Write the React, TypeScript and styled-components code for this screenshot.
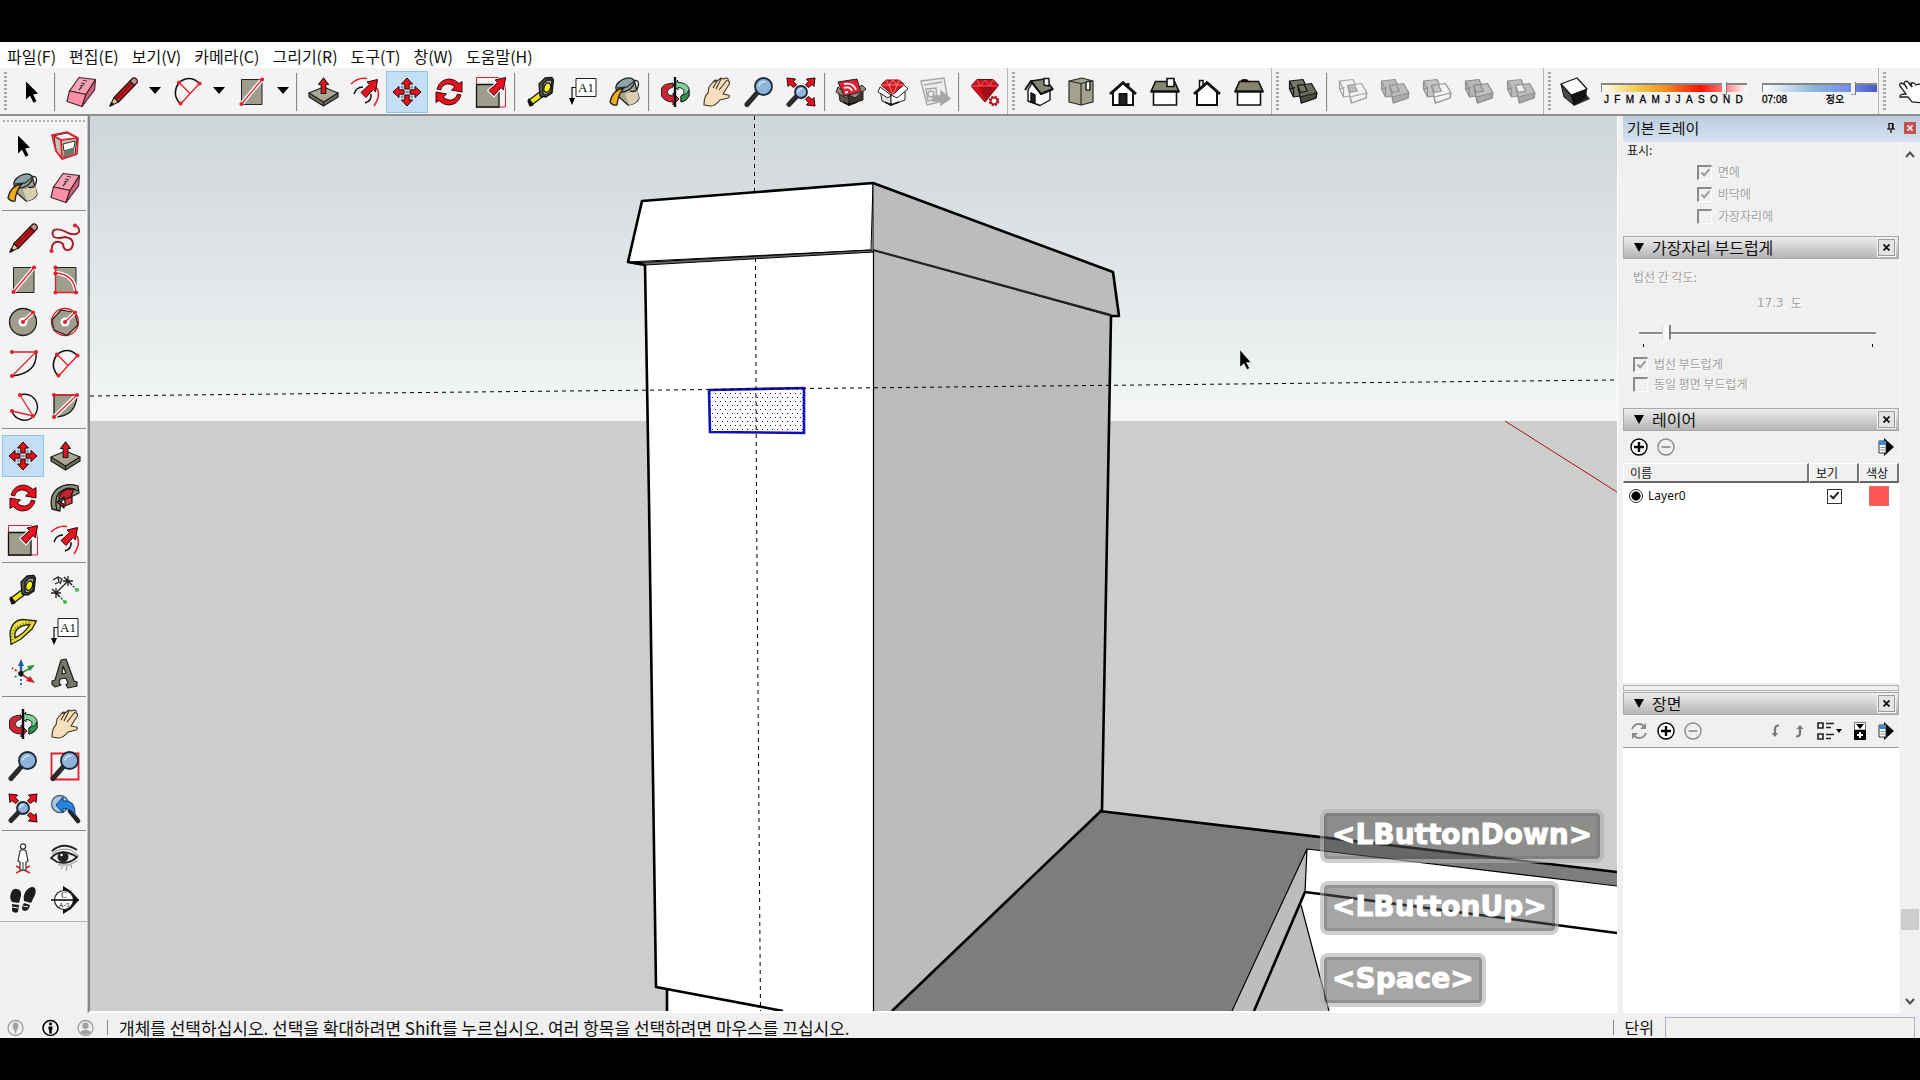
import React from "react";
import styled, { createGlobalStyle, css } from "styled-components";

const GlobalStyle = createGlobalStyle`
  *, *::before, *::after { box-sizing: border-box; }
  html, body { margin: 0; background: #000; }
  body { font-family: "Noto Sans CJK KR", "Noto Sans", sans-serif; color: #111; }
  button, input { font: inherit; color: inherit; margin: 0; }
`;

const RED = "#e8121f";
const STONE = "#9f9e8c";
const MARK = "#e0202e";

/* ---------- icons ---------- */

const NE = "30.5,1.5 20,4 22.5,6.5 14,14.5 19,19.5 26,11.5 28.5,14";

const Box3 = ({ a, b, c, line }: { a: string; b: string; c: string; line: string }) => (
  <g stroke={line} strokeWidth="1.200" strokeLinejoin="round">
    <path d="M2.500 5 16 3.500 21 14 20 19 6.500 21 2.500 13Z" fill={a} />
    <path d="M10.500 9.500 24.500 7.500 30 17 29 22 14.500 27 13 20Z" fill={b} />
    <path d="M13 21 29.500 17 29 22 14.500 27Z" fill={c} />
    <path d="M10.500 9.500 17 8.500 20.500 15 13.500 16.500Z" fill={c === "none" ? "#bbb" : a} />
    <path d="M2.500 13 8 11.500M2.500 5 6.500 14 6.500 21" fill="none" />
  </g>
);

const Bucket = (
  <g stroke="#222" strokeWidth="1.3" strokeLinejoin="round">
    <path d="M10 7 Q19 0 25 4 L30 22 Q28 28 19 29 L10 21Z" fill="#a9a48c" />
    <path d="M16 18 28 13 30 22 Q27 28 20 29Z" fill="#d8d0b0" stroke="none" />
    <ellipse cx="16" cy="9" rx="10" ry="6" transform="rotate(-28 16 9)" fill="#8ea3a6" />
    <path d="M8 12 18 11 27 4" fill="none" stroke="#333" />
    <path d="M1 26 Q4 13 15 12 Q9 18 8 29 Q4 30 1 26Z" fill="#f5ac19" />
    <path d="M25 5 Q31 3 29 11 Q27 17 21 15" fill="none" />
  </g>
);

const Lens = ({ x, y, r }: { x: number; y: number; r: number }) => (
  <g>
    <path d={`M4 28.5 ${x - r * 0.8} ${y + r * 0.8}`} stroke="#2b2b2b" strokeWidth="5" strokeLinecap="round" />
    <circle cx={x} cy={y} r={r} fill="#8fb4dc" stroke="#1c2a38" strokeWidth="1.8" />
    <path d={`M${x - r * 0.55} ${y} Q${x - r * 0.4} ${y - r * 0.6} ${x + r * 0.2} ${y - r * 0.55}`} stroke="#cfe3f5" strokeWidth="1.6" fill="none" />
  </g>
);

const Dots = ({ p }: { p: number[][] }) => (
  <>
    {p.map(([x, y]) => (
      <circle key={`${x}-${y}`} cx={x} cy={y} r="2.1" fill={MARK} />
    ))}
  </>
);

const House = ({ door, chimney, side }: { door?: boolean; chimney?: "l" | "r"; side?: boolean }) =>
  side ? (
    <g stroke="#111" strokeWidth="1.6">
      <path d="M4.500 16V29H27.500V16" fill="#fff" />
      <path d="M6.500 5.500H25.500L30 15.500H2Z" fill="#86856f" />
      <path d="M2 15.500H30" strokeWidth="2.400" />
    </g>
  ) : (
    <g stroke="#111" strokeWidth="2">
      {chimney === "r" && <path d="M21 7V10" strokeWidth="3" />}
      {chimney === "l" && <path d="M8.500 13V4.500H12V9" fill="#fff" strokeWidth="1.500" />}
      <path d="M6 16V29H26V16L16 7Z" fill="#fff" />
      <path d="M3 18 16 6.500 29 18" fill="none" strokeWidth="2.800" />
      {door && <path d="M12.500 29V18H19.500V29Z" fill="#222" />}
    </g>
  );

const Crate = ({ gem }: { gem?: boolean }) => (
  <g stroke="#222" strokeWidth="1" strokeLinejoin="round">
    <path d="M3 12 14 19 14 29 5 25Z" fill={gem ? "#e2e2e2" : "#5d534c"} />
    <path d="M28 12 14 19 14 29 28 24Z" fill={gem ? "#fff" : "#3c3632"} />
    <path d="M3 11 1 16 11 22 14 19ZM27 9 31 13 20 22 14 19Z" fill={gem ? "#fff" : "#94887a"} />
    {gem ? (
      <>
        <path d="M4 9 9 4H22L27 8 16 19Z" fill="#d4141f" stroke="#7d0a12" />
        <path d="M4 9H27M9 4 12 9 16 19 20 9 22 4M12 9 16 4 20 9" stroke="#f58a8a" fill="none" />
      </>
    ) : (
      <>
        <path d="M3 6 22 3 26 16 9 20Z" fill="#dc2130" />
        <path d="M9 8Q18 6 21 14M9 12Q15 10 17 15M10 16.500 13 16" stroke="#fff" strokeWidth="1.800" fill="none" />
      </>
    )}
    <path d="M14 27V30M8 26 14 29 22 26" stroke="#111" strokeWidth="1.600" fill="none" />
  </g>
);

const icons: Record<string, React.ReactNode> = {
  select: <path d="M11 5.500V23.500L15 19.800 18.500 26.800 21.500 25.300 18.200 18.500 23 17.500Z" fill="#000" />,
  eraser: (
    <g stroke="#43252c" strokeWidth="1.200" strokeLinejoin="round">
      <path d="M14 1.500 30.500 3.500 21 18.500 4.500 15Z" fill="#f4a3b6" />
      <path d="M4.500 15 21 18.500 17 30.500 2 25.500Z" fill="#ff8fa6" />
      <path d="M30.500 3.500 29.500 14 17 30.500 21 18.500Z" fill="#d7607b" />
      <path d="M14 14 17 10.500M15 10 19 9M16 7 20 8M18 4.500 22 5" stroke="#5a2a38" fill="none" />
    </g>
  ),
  pencil: (
    <g stroke="#2a1512" strokeWidth="1.200" strokeLinejoin="round">
      <path d="M3 30 7 21.500 11.500 26Z" fill="#e8cf9c" />
      <path d="M7 21.500 23 5 27.500 9.500 11.500 26Z" fill="#c8141c" />
      <path d="M23 5 26 2Q30 1.500 30.500 6L27.500 9.500Z" fill="#c98f8f" />
      <path d="M9 23.500 25 7" stroke="#7c0c10" />
      <path d="M3 30 4.500 26.500 6.500 28.500Z" fill="#111" />
    </g>
  ),
  arc: (
    <g fill="none">
      <path d="M9.500 28Q0 18 8 6.500 19 -2 28.500 7.500" stroke="#111" strokeWidth="1.500" />
      <path d="M9.500 28 28.500 7.500M8 6.500 19 17.500" stroke={MARK} strokeWidth="1.300" />
      <Dots p={[[9.5, 27.5], [28.5, 7.5], [8, 6.5]]} />
    </g>
  ),
  rect: (
    <g>
      <path d="M6.500 3.500H27V28.500H6.500Z" fill={STONE} stroke="#222" />
      <path d="M6.500 28 27 3.500" stroke="#fff" strokeWidth="4" />
      <path d="M6.500 28 27 3.500" stroke={MARK} strokeWidth="1.300" />
      <Dots p={[[6.5, 28], [27, 3.5]]} />
    </g>
  ),
  push: (
    <g stroke="#1e1e1a" strokeWidth="1.200" strokeLinejoin="round">
      <path d="M2 17V21L16.500 30 31 21V17L16.500 25Z" fill="#6f6e5f" />
      <path d="M2 17 16.500 11 31 17 16.500 26Z" fill="#a9a894" />
      <path d="M16.500 26V30" />
      <path d="M16.500 2 21.500 8.500H18.800V17.500H14.200V8.500H11.500Z" fill={RED} />
    </g>
  ),
  offset: (
    <g fill="none">
      <path d="M2 8Q9 1 18 2.500M28 12Q32 20 25 30" stroke={MARK} strokeWidth="1.600" />
      <path d="M5 18Q7 11 14 11M22 18Q23 25 16 27" stroke="#111" strokeWidth="1.500" />
      <polygon points={NE} fill={RED} stroke="#2a0508" strokeWidth="1" transform="translate(-2 2)" />
    </g>
  ),
  move: (
    <g>
      {[0, 90, 180, 270].map((r) => (
        <path key={r} transform={`rotate(${r} 16 16)`} d="M16 2 21.500 8H18.200V13H13.800V8H10.500Z" fill={RED} stroke="#2a0508" strokeWidth="1" />
      ))}
      <path d="M10.500 10.500 12 12M21.500 10.500 20 12M10.500 21.500 12 20M21.500 21.500 20 20M14.500 16H17.500" stroke="#8b8b8b" strokeWidth="2" />
    </g>
  ),
  rotate: (
    <g fill={RED} stroke="#3a060a" strokeWidth="1" strokeLinejoin="round">
      {[0, 180].map((r) => (
        <path key={r} transform={`rotate(${r} 16 16)`} d="M4 13Q7 3 17 3Q22 3.500 26 7.500L29 5.500V16L18.500 14L22 11Q17 6.500 12 8.500Q8.500 10 7.500 14Z" />
      ))}
    </g>
  ),
  scale: (
    <g>
      <path d="M1.500 1.500H30.500V31H1.500Z" fill="none" stroke={MARK} />
      <path d="M1.500 8.500H24V31H1.500Z" fill={STONE} stroke="#111" strokeWidth="1.300" />
      <polygon points={NE} fill={RED} stroke="#fff" strokeWidth="3" />
      <polygon points={NE} fill={RED} stroke="#2a0508" strokeWidth="1" />
    </g>
  ),
  tape: (
    <g stroke="#161616" strokeWidth="1.300" strokeLinejoin="round">
      <path d="M4 24 16 15 20 19 8 28Z" fill="#f2e50f" />
      <path d="M4 23 8 29 5 30 3 25Z" fill="#111" />
      <path d="M14 8 20 2 27 1.500 28.500 4 27 17 21 21 15 20Z" fill="#55554c" />
      <path d="M18 8 22 4 27 4 26 16 21 19 18 18Z" fill="#a9a9a0" />
      <ellipse cx="22.500" cy="11.500" rx="3.200" ry="4.800" fill="#fbf312" transform="rotate(20 22 11)" />
    </g>
  ),
  text: (
    <g>
      <path d="M9 2.500H29V20.500H9Z" fill="#fff" stroke="#222" />
      <path d="M9 11.500H5V24" fill="none" stroke="#111" strokeWidth="1.200" />
      <path d="M2 22H8L5 29Z" fill="#000" />
      <text x="19" y="15.500" textAnchor="middle" fontFamily="Liberation Serif, serif" fontSize="13" fill="#111">A1</text>
    </g>
  ),
  paint: Bucket,
  orbit: (
    <g stroke="#222" strokeWidth="1" strokeLinejoin="round">
      <path d="M14 7Q3 8 2.500 13L2.500 20Q6 26 14 26V29L20 23 14 17V20Q9 20 8 16 9 12 14 11Z" fill="#cf2432" />
      <path d="M18 6Q29 7 30 13V20Q28 25 22 26V20Q26 18 25 14Q22 11 19 11.500V14L14 9 19 4Z" fill="#7ed39c" />
      <path d="M30 14V20Q28 25 22 26V20Q29 18 30 14Z" fill="#27984a" />
      <path d="M16 1V31" stroke="#111" strokeWidth="2.400" />
    </g>
  ),
  pan: (
    <path d="M3 29Q3 20 7 17L8 11 13 5Q15 3 16 5L20 2Q22 2 22 3L25 2Q28 2 27 5L28.500 6Q29 8 27 10L22 18 27 19Q30 20 27 22L19 24Q14 30 10 30ZM13 5.500 16 5 12 12M20 3 15 13M26 4 18 14" fill="#f6dfba" stroke="#3f3325" strokeWidth="1.100" strokeLinejoin="round" />
  ),
  zoom: <Lens x={20.5} y={10.5} r={8.5} />,
  zoomwin: (
    <g>
      <path d="M2.500 3.500H29.500V29.500H2.500Z" fill="none" stroke={MARK} strokeWidth="1.800" />
      <Lens x={20.5} y={10.5} r={8.5} />
    </g>
  ),
  extents: (
    <g>
      <Lens x={16} y={16} r={6} />
      {["M2 2 10.500 3 8.500 5.500 11.500 9 8.500 11.500 5 8.500 3 10.500Z", "M30 2 21.500 3 23.500 5.500 20.500 9 23.500 11.500 27 8.500 29 10.500Z", "M30 30 21.500 29 23.500 26.500 20.500 23 23.500 20.500 27 23.500 29 21.500Z"].map((d) => (
        <path key={d} d={d} fill={RED} stroke="#2a0508" strokeWidth="1" />
      ))}
    </g>
  ),
  previous: (
    <g strokeLinejoin="round">
      <path d="M21 19 29 29" stroke="#222" strokeWidth="4.500" strokeLinecap="round" />
      <circle cx="11" cy="12" r="8.500" fill="#a8c6e4" stroke="#4a6076" strokeWidth="1.300" />
      <path d="M7 13 14 5V9Q27 7 26 24 23 16 14 16.500V21Z" fill="#2584de" stroke="#0f3d70" />
    </g>
  ),
  crate: <Crate />,
  crateGem: <Crate gem />,
  layout: (
    <g stroke="#a6a6a6" strokeWidth="1.400" fill="#ededed">
      <path d="M2 5 25 2 29 24 8 29Z" />
      <path d="M5 9 23 6M7 13 17 12 18 23 9 25Z" fill="none" />
      <circle cx="12" cy="18" r="3" />
      <path d="M14 20H22V15L31 22.500 22 29V25H14Z" fill="#a6a6a6" />
    </g>
  ),
  ruby: (
    <g strokeLinejoin="round">
      <path d="M2 10 8 3.500H24L29.500 9 16 26Z" fill="#cf101c" stroke="#6d070e" />
      <path d="M2 10H29.500L16 26 11 10Z" fill="#a30d17" stroke="none" />
      <path d="M8 3.500 11 10 16 4 21 10 24 3.500M2 10H29.500" fill="none" stroke="#ee5a62" />
      <circle cx="25" cy="25" r="4" fill="#f3f3f3" stroke="#b01822" strokeWidth="2.600" strokeDasharray="2.100 1.040" />
      <circle cx="25" cy="25" r="3.200" fill="#f3f3f3" stroke="#b01822" strokeWidth="1.500" />
    </g>
  ),
  iso: (
    <g stroke="#111" strokeWidth="1.400" strokeLinejoin="round">
      <path d="M5 14V25L17 29.500 27 24V14L18 18 9 7Z" fill="#fff" />
      <path d="M8 5 22 3 30 13 18 18Z" fill="#86856f" />
      <path d="M2 14 8 5 18 18 30 13" fill="none" strokeWidth="2" />
      <path d="M8 26V17L12 19V27Z" fill="#222" />
      <path d="M21 9V2.500H26V10Z" fill="#fff" />
    </g>
  ),
  top: (
    <g stroke="#2b2b25" strokeWidth="1.200" strokeLinejoin="round">
      <path d="M4 5 17 2 28 5V26L16 29 4 26Z" fill="#a3a28f" />
      <path d="M4 5 16 7.500 28 5M16 7.500V29" fill="none" />
      <path d="M21 6V14H25V5Z" fill="#fff" strokeWidth="1.600" />
    </g>
  ),
  front: <House door chimney="r" />,
  right: (
    <g>
      <House side />
      <path d="M18 2.500H25V10.500H18Z" fill="#fff" stroke="#111" strokeWidth="1.600" />
    </g>
  ),
  back: <House chimney="l" />,
  left: (
    <g>
      <path d="M8 5Q12 3 15 5" stroke="#111" strokeWidth="2" fill="none" />
      <House side />
    </g>
  ),
  shell: <Box3 a="#75756a" b="#6a6a5f" c="#4b4b42" line="#151515" />,
  solid1: <Box3 a="#f3f3f3" b="#f3f3f3" c="none" line="#a2a2a2" />,
  solid2: <Box3 a="#bcbcbc" b="#bcbcbc" c="#aaa" line="#929292" />,
  solid3: <Box3 a="#c4c4c4" b="#f3f3f3" c="#f3f3f3" line="#929292" />,
  solid4: <Box3 a="#b6b6b6" b="#c0c0c0" c="#aaa" line="#8c8c8c" />,
  solid5: (
    <g>
      <Box3 a="#bcbcbc" b="#bcbcbc" c="#aaa" line="#929292" />
      <path d="M10.500 9.500 17 8.500 20.500 15 13.500 16.500Z" fill="#eee" stroke="#929292" />
    </g>
  ),
  shadow: (
    <g strokeLinejoin="round">
      <path d="M8 21 15 30 31 23 26 17Z" fill="#2c2c2c" />
      <path d="M2 8 12 19 15 29 5 21Z" fill="#4c4c4c" stroke="#111" />
      <path d="M12 19 28 13 27 22 15 29Z" fill="#111" />
      <path d="M2 8 18 2 28 13 12 19Z" fill="#fff" stroke="#111" strokeWidth="1.200" />
    </g>
  ),
  grab: (
    <path d="M7 7Q12 8 13 13L10 7Q12 4 14 6L18 11 17 7Q20 6 22 9 26 7 30 10V27L18 26 14 21 6 21Q5 18 12 18L6 10Q5 8 7 7Z" fill="#fff" stroke="#222" strokeWidth="1.300" />
  ),
  component: (
    <g strokeLinejoin="round">
      <path d="M5 7 19 3 28 8 26 25 13 29 7 21Z" fill="#c3c2b4" stroke="#222" />
      <path d="M4 6 18 3 28 8 12 10Z" fill="#f2f2f2" stroke="#333" />
      <path d="M14 14 26 11 25 18 15 21Z" fill="#fff" stroke="#333" />
      <path d="M15 21 25 18V24L14 28Z" fill="#77766a" />
      <path d="M3 5 18 2 29 8 28 24 13 29 7 21ZM3 5 12 10 29 8M12 10 13 29" fill="none" stroke={MARK} strokeWidth="1.700" />
    </g>
  ),
  freehand: (
    <g>
      <path d="M26 3Q31 6 30 10 27 14 19 11 10 6 5 8 2 11 5 15 9 17 16 15 24 16 24 22 23 29 17 28 14 26 14 22 10 18 5 21 2 24 3 29" fill="none" stroke="#a51c28" strokeWidth="1.900" />
      <Dots p={[[26, 3.5], [2.5, 29]]} />
    </g>
  ),
  rotrect: (
    <g>
      <path d="M6.500 3.500H27V28.500H6.500Z" fill={STONE} stroke="#222" />
      <path d="M6.500 9Q25 10 27 28" fill="none" stroke="#fff" strokeWidth="4" />
      <path d="M6.500 3.500V28.500H27Q25 10 6.500 9" fill="none" stroke={MARK} strokeWidth="1.300" />
      <Dots p={[[6.5, 3.5], [6.5, 9.5], [6.5, 28.5], [27, 28.5]]} />
    </g>
  ),
  circle: (
    <g>
      <circle cx="16" cy="16" r="13.500" fill={STONE} stroke="#222" strokeWidth="1.300" />
      <circle cx="16" cy="16" r="4.500" fill="#fff" />
      <path d="M16 16 26 6.500" stroke="#fff" strokeWidth="4" />
      <path d="M16 16 26 6.500" stroke={MARK} strokeWidth="1.300" />
      <Dots p={[[16, 16], [26, 6.5]]} />
    </g>
  ),
  polygon: (
    <g>
      <circle cx="16" cy="16" r="13.500" fill="none" stroke={MARK} strokeWidth="1.300" />
      <path d="M12 4 26 6.500 29 19 18 29.500 5 24 3 14Z" fill={STONE} stroke="#222" strokeWidth="1.200" />
      <circle cx="16" cy="16" r="4.500" fill="#fff" />
      <path d="M16 16 26 6.500" stroke="#fff" strokeWidth="4" />
      <path d="M16 16 26 6.500" stroke={MARK} strokeWidth="1.300" />
      <Dots p={[[16, 16], [26, 6.5]]} />
    </g>
  ),
  arc2: (
    <g fill="none">
      <path d="M29 4Q31 25 5 28" stroke="#111" strokeWidth="1.400" />
      <path d="M5 4H29L5 28" stroke={MARK} strokeWidth="1.300" />
      <Dots p={[[5, 4], [29, 4], [5, 28]]} />
    </g>
  ),
  arc3: (
    <g fill="none">
      <path d="M13 5A13 13 0 1 1 5 21" stroke="#111" strokeWidth="1.400" />
      <path d="M13 5 26 26 5 21" stroke={MARK} strokeWidth="1.300" />
      <Dots p={[[13, 5], [26, 26], [5, 21]]} />
    </g>
  ),
  pie: (
    <g>
      <path d="M5 5H28Q27 27 5 27Z" fill={STONE} stroke="#111" strokeWidth="1.200" />
      <path d="M5 27 28 5" stroke="#fff" strokeWidth="4" />
      <path d="M5 5H28L5 27" fill="none" stroke={MARK} strokeWidth="1.300" />
      <Dots p={[[5, 5], [28, 5], [5, 27]]} />
    </g>
  ),
  follow: (
    <g stroke="#1b1b18" strokeWidth="1.300" strokeLinejoin="round">
      <path d="M11 29 3 27Q0 14 8 7 17 0 29 4L30 11 24 14Q11 12 11 29Z" fill="#8f8e7d" />
      <path d="M8 28Q4 13 14 8 21 4 29 9" fill="none" />
      <path d="M25 7Q11 6 10 16 11 22 15 22V26L8 20 15 15V18Q19 20 22 14Z" fill="#c5202c" />
      <path d="M16 17 23 15V21L16 24Z" fill="#e2393f" />
    </g>
  ),
  dimension: (
    <g fill="none" stroke="#222" strokeWidth="1.300">
      <path d="M7 19 19 7M3 15 11 23M2 19H12M7 14V24M15 3 23 11M14 7H24M19 2V12" />
      <path d="M7 19 16 28M19 7 28 16" strokeDasharray="2 1.500" />
      <path d="M4 6 9 3 10 8 6 10M9 3 13 5 11 10" />
      <circle cx="16" cy="28" r="2" fill="#45bd48" stroke="none" />
      <circle cx="28" cy="16" r="2" fill="#45bd48" stroke="none" />
    </g>
  ),
  protractor: (
    <g strokeLinejoin="round">
      <path d="M4 28.500 3 17Q5 4 16 3.500L29.500 5 25 13 14 23ZM8 22Q6 10 23 8.500 18 17 8 22Z" fillRule="evenodd" fill="#e8dd3c" stroke="#2d2a08" strokeWidth="1.400" />
      <path d="M5.500 24Q3 8 25 6.500" stroke="#6d6715" strokeDasharray="1 2" strokeWidth="1.800" fill="none" />
    </g>
  ),
  axes: (
    <g fill="none" strokeWidth="1.800">
      <path d="M14 15V6" stroke="#235ca8" strokeWidth="2.400" />
      <path d="M14 1 17 8H11Z" fill="#235ca8" />
      <path d="M14 15 22 11" stroke="#2d9439" />
      <path d="M28 7 20 8 23 13Z" fill="#2d9439" />
      <path d="M14 16 22 21" stroke="#cd1e28" />
      <path d="M28 25 19 23 23 18Z" fill="#cd1e28" />
      <path d="M13 15 5 10" stroke="#cd1e28" strokeDasharray="2 2" />
      <path d="M13 16 6 20" stroke="#2d9439" strokeDasharray="2 2" />
      <path d="M14 17V27" stroke="#235ca8" strokeDasharray="2 2" />
      <circle cx="14" cy="15.500" r="2.500" fill="#111" />
    </g>
  ),
  text3d: (
    <g stroke="#20201c" strokeWidth="1.200" strokeLinejoin="round">
      <path d="M12 2 17 1 25 23 28 24V28L19 30 17 27 19 25 17 20 11 21 10 25 12 27 6 29 3 26 3 23 6 22Z" fill="#77766a" />
      <path d="M13 16 17 15 14 8Z" fill="#f3f3f3" />
    </g>
  ),
  person: (
    <g strokeLinejoin="round">
      <path d="M9 24 23 31M23 24 9 31" stroke={MARK} strokeWidth="1.400" />
      <path d="M13 9Q16 6 19 9L21 19 19 20V28H13V20L11 19Z" fill="#fff" stroke="#333" strokeWidth="1.200" />
      <path d="M16 20V28" stroke="#333" strokeWidth="1" />
      <circle cx="16" cy="4.500" r="2.600" fill="#fff" stroke="#333" strokeWidth="1.200" />
    </g>
  ),
  eye: (
    <g fill="none" stroke="#222">
      <path d="M3 9Q14 -1 28 8" strokeWidth="2" />
      <path d="M2 16Q12 5 28 15Q20 23 8 20Z" fill="#ececec" strokeWidth="1.800" />
      <circle cx="14" cy="15" r="5" fill="#222" />
      <circle cx="12.500" cy="13" r="1.300" fill="#fff" stroke="none" />
      <path d="M3 12Q10 5 22 8L30 14M9 23 20 23 28 19M12 27 14 24M17 29 18 24M23 26 22 23" stroke="#8b8b8b" />
    </g>
  ),
  feet: (
    <g fill="#1d1d1d">
      <path d="M4 9Q6 4 10 5Q15 6 14 12L12 19 5 18Q2 14 4 9ZM5 20 12 21 11 28Q8 30 5 27Z" />
      <path d="M19 7Q24 1 28 4Q30 8 26 15L24 19 17 17Q16 11 19 7ZM17 19 23 21Q22 27 17 27Q13 25 17 19Z" />
      <path d="M5 23 11 24M16 22 21 23" stroke="#eee" />
    </g>
  ),
  section: (
    <g>
      <path d="M14 2 22 7 30 16 22 25 14 30Z" fill="#111" />
      <circle cx="15" cy="16" r="9.500" fill="#fff" stroke="#222" strokeWidth="1.200" />
      <path d="M2 16H30" stroke="#111" strokeWidth="1.600" />
      <text x="15" y="14" textAnchor="middle" fontSize="8" fontFamily="Liberation Serif, serif">C</text>
      <text x="15" y="23" textAnchor="middle" fontSize="7" fontFamily="Liberation Serif, serif">A-5</text>
    </g>
  ),
};

const Svg32 = styled.svg`
  display: block;
  flex: none;
  width: 32px;
  height: 32px;
`;
const Icon = ({ name }: { name: string }) => (
  <Svg32 viewBox="0 0 32 32" aria-hidden="true">
    {icons[name]}
  </Svg32>
);

/* ---------- frame ---------- */

const Screen = styled.div`
  display: flex;
  flex-direction: column;
  height: 100vh;
  padding: 42px 0;
  background: #000;
  overflow: hidden;
`;
const AppWindow = styled.main`
  display: flex;
  flex-direction: column;
  flex: 1;
  min-height: 0;
  background: #f0f0f0;
`;
const MenuBar = styled.nav`
  display: flex;
  align-items: center;
  gap: 13px;
  height: 26px;
  padding: 2px 7px 0;
  background: #fff;
`;
const MenuItem = styled.button`
  padding: 0;
  border: 0;
  background: none;
  font-size: 16px;
  line-height: 24px;
  white-space: nowrap;
`;

/* ---------- top toolbar ---------- */

const ToolBar = styled.div`
  display: flex;
  height: 48px;
  flex: none;
  overflow: hidden;
  background: #f3f3f3;
  border-bottom: 2px solid #8f8f8f;
`;
const ToolGroup = styled.div<{ $grow?: boolean }>`
  display: flex;
  align-items: center;
  flex: ${(p) => (p.$grow ? "1 0 auto" : "none")};
  padding: 2px 1px 0 0;
  border-right: 1px solid #b4b4b4;
`;
const Grip = styled.span`
  flex: none;
  align-self: stretch;
  width: 3px;
  margin: 2px 3px 2px 4px;
  background: repeating-linear-gradient(#a8a8a8 0 2px, transparent 2px 4px);
`;
const ToolButton = styled.button<{ $active?: boolean }>`
  display: flex;
  align-items: center;
  justify-content: center;
  flex: none;
  width: 42px;
  height: 42px;
  padding: 0;
  border: 1px solid ${(p) => (p.$active ? "#90c3ea" : "transparent")};
  background: ${(p) => (p.$active ? "#c3dff4" : "transparent")};
`;
const Divider = styled.span`
  flex: none;
  width: 2px;
  height: 38px;
  margin: 0 4px 0 2px;
  background: linear-gradient(90deg, #8a8a8a 50%, #e4e4e4 50%);
`;
const MoreButton = styled.button`
  display: flex;
  align-items: center;
  justify-content: center;
  width: 22px;
  height: 42px;
  padding: 0 0 4px;
  border: 0;
  background: none;
`;
const Triangle = styled.span<{ $small?: boolean }>`
  border: solid transparent;
  border-width: ${(p) => (p.$small ? "4px 3px 0" : "7px 6px 0")};
  border-top-color: #000;
`;

type Tool = [icon: string, label: string, extra?: "active" | "more"];
const Tools = ({ items }: { items: (Tool | null)[] }) => (
  <>
    {items.map((t, i) =>
      t ? (
        <React.Fragment key={t[0]}>
          <ToolButton type="button" aria-label={t[1]} $active={t[2] === "active"}>
            <Icon name={t[0]} />
          </ToolButton>
          {t[2] === "more" && (
            <MoreButton type="button" aria-label={`${t[1]} 더 보기`}>
              <Triangle />
            </MoreButton>
          )}
        </React.Fragment>
      ) : (
        <Divider key={i} />
      )
    )}
  </>
);

const mainTools: (Tool | null)[] = [
  ["select", "선택"], null,
  ["eraser", "지우개"], ["pencil", "선", "more"], ["arc", "호", "more"], ["rect", "직사각형", "more"], null,
  ["push", "밀기/끌기"], ["offset", "오프셋"], ["move", "이동", "active"], ["rotate", "회전"], ["scale", "배율"], null,
  ["tape", "줄자"], ["text", "텍스트"], ["paint", "페인트통"], null,
  ["orbit", "궤도"], ["pan", "이동 보기"], ["zoom", "확대"], ["extents", "범위 확대"], null,
  ["crate", "3D Warehouse"], ["crateGem", "Extension Warehouse"], ["layout", "LayOut"], null,
  ["ruby", "확장 관리자"],
];
const viewTools: Tool[] = [["iso", "등각"], ["top", "상단"], ["front", "정면"], ["right", "우측"], ["back", "후면"], ["left", "좌측"]];
const solidTools: (Tool | null)[] = [["shell", "외부 쉘"], null, ["solid1", "교차"], ["solid2", "결합"], ["solid3", "빼기"], ["solid4", "트림"], ["solid5", "분할"]];

const ShadowSliders = styled.div`
  display: flex;
  gap: 15px;
  width: 281px;
  padding: 11px 0 0 5px;
  align-self: flex-start;
  overflow: hidden;
`;
const ShadowField = styled.label`
  display: flex;
  flex-direction: column;
  flex: none;
  width: 146px;
  font: 10px/12px "Liberation Sans", "Noto Sans CJK KR", sans-serif;
  color: #000;
`;
const ColorRange = styled.input<{ $ramp: string }>`
  appearance: none;
  display: block;
  width: 100%;
  height: 13px;
  background: none;
  &::-webkit-slider-runnable-track {
    height: 9px;
    border: solid #858585;
    border-width: 2px 0 0 1px;
    background: linear-gradient(90deg, ${(p) => p.$ramp});
  }
  &::-webkit-slider-thumb {
    appearance: none;
    width: 5px;
    height: 13px;
    margin-top: -3px;
    background: #f5f5f5;
    border-right: 1px solid #777;
    border-bottom: 1px solid #999;
  }
`;
const Marks = styled.span`
  display: flex;
  justify-content: space-between;
  padding: 0 4px 0 3px;
  -webkit-text-stroke: 0.3px #000;
`;
const TimeMarks = styled.span`
  display: grid;
  grid-template-columns: 1fr auto 1fr;
  line-height: 12px;
  -webkit-text-stroke: 0.3px #000;
`;

/* ---------- body ---------- */

const Body = styled.div`
  display: flex;
  flex: 1;
  min-height: 0;
`;
const Side = styled.aside`
  flex: none;
  width: 88px;
  border-right: 1px solid #c6c6c6;
`;
const Palette = styled.div`
  padding: 4px 1px 0 2px;
  background: #f3f3f3;
  border-bottom: 1px solid #b4b4b4;
`;
const PaletteGrip = styled.div`
  height: 2px;
  margin: 0 1px 3px;
  background: repeating-linear-gradient(90deg, #b0b0b0 0 2px, transparent 2px 4px);
`;
const PaletteGroup = styled.div`
  display: grid;
  grid-template-columns: 42px 42px;
  & + & {
    margin-top: 1px;
    padding-top: 6px;
    border-top: 1px solid #8a8a8a;
  }
`;
const paletteGroups: Tool[][] = [
  [["select", "선택"], ["component", "구성요소 만들기"], ["paint", "페인트통"], ["eraser", "지우개"]],
  [["pencil", "선"], ["freehand", "자유곡선"], ["rect", "직사각형"], ["rotrect", "회전 직사각형"], ["circle", "원"], ["polygon", "다각형"], ["arc2", "호"], ["arc", "2점 호"], ["arc3", "3점 호"], ["pie", "파이"]],
  [["move", "이동", "active"], ["push", "밀기/끌기"], ["rotate", "회전"], ["follow", "따라가기"], ["scale", "배율"], ["offset", "오프셋"]],
  [["tape", "줄자"], ["dimension", "치수"], ["protractor", "각도기"], ["text", "텍스트"], ["axes", "축"], ["text3d", "3D 텍스트"]],
  [["orbit", "궤도"], ["pan", "이동 보기"], ["zoom", "확대"], ["zoomwin", "창 확대"], ["extents", "범위 확대"], ["previous", "이전"]],
  [["person", "카메라 배치"], ["eye", "둘러보기"], ["feet", "걷기"], ["section", "단면"]],
];

const Viewport = styled.section`
  position: relative;
  flex: 1;
  min-width: 0;
  border-left: 2px solid #858585;
  border-bottom: 2px solid #fff;
  background: #cdcdcb;
`;
const Scene = styled.svg`
  display: block;
  width: 100%;
  height: 100%;
`;
const KeyOverlay = styled.div`
  position: absolute;
  right: 15px;
  bottom: 8px;
  display: flex;
  flex-direction: column;
  align-items: flex-start;
  gap: 26px;
  width: 278px;
`;
const KeyBadge = styled.div`
  height: 46px;
  padding: 0 5px;
  border: 3px solid rgba(82, 82, 82, 0.25);
  border-radius: 4px;
  background: rgba(82, 82, 82, 0.52);
  box-shadow: 0 0 0 4px rgba(175, 175, 175, 0.6);
  color: #fff;
  font: bold 28px/38px "DejaVu Sans", sans-serif;
  -webkit-text-stroke: 1px #fff;
  white-space: nowrap;
`;

const Model = () => (
  <Scene viewBox="90 116 1527 895" preserveAspectRatio="xMidYMid slice" role="img" aria-label="모델 보기">
    <defs>
      <linearGradient id="sky" x1="0" y1="0" x2="0" y2="1">
        <stop offset="0" stopColor="#ced6d8" />
        <stop offset="0.500" stopColor="#e1e5e7" />
        <stop offset="1" stopColor="#f5f7f7" />
      </linearGradient>
      <pattern id="dots" width="5" height="8" patternUnits="userSpaceOnUse">
        <path d="M0 1H1V2H0ZM2 5H3V6H2Z" fill="#15156a" />
      </pattern>
    </defs>
    <path d="M90 116H1617V421H90Z" fill="url(#sky)" />
    <path d="M90 421H1617V1011H90Z" fill="#cdcdcb" />
    <path d="M1505 421 1617 492" stroke="#a01818" fill="none" />
    <path d="M754.500 116V200" stroke="#000" strokeDasharray="4 4" />
    <g stroke="#000" strokeLinejoin="round">
      <path d="M1099 811 1617 872V886L1307 849 1232 1011H892Z" fill="#7d7d7d" stroke="none" />
      <path d="M1307 849 1617 886V1011H1329L1301 905 1305 892Z" fill="#fff" stroke="none" />
      <path d="M1307 849 1305 892 1301 905 1329 1011H1232Z" fill="#bdbdbd" stroke="none" />
      <path d="M1617 886 1307 849 1232 1011M1307 849 1305 892M1301 905 1329 1011" fill="none" strokeWidth="1.200" />
      <path d="M1254 1011 1305 892 1617 933" fill="none" strokeWidth="2.600" />
      <path d="M874 250 1111 316 1102 810 892 1011H874Z" fill="#bcbcbc" stroke="none" />
      <path d="M645 264 874 250V1011H783L656 987Z" fill="#fff" stroke="none" />
      <path d="M656 987 667 990V1011H783Z" fill="#fff" stroke="none" />
      <path d="M873.500 250V1011" fill="none" strokeWidth="1.200" />
      <path d="M645 264 649 500 656 987 783 1011M667 990V1011M1111 316 1102 810 892 1011M1099 811 1617 872" fill="none" strokeWidth="2.600" />
      <path d="M642 201 873 183 871 250 628 262Z" fill="#fff" strokeWidth="1" />
      <path d="M873 183 1113 272 1119 316 1111 316 873 250Z" fill="#bcbcbc" strokeWidth="1" />
      <path d="M630 263 871 250 874 252 645 265Z" fill="#666" strokeWidth="1" />
      <path d="M873 250 1111 315" strokeWidth="2.200" stroke="#222" />
      <path d="M645 265 628 262 642 201 873 183 1113 272 1119 316H1111" fill="none" strokeWidth="2.600" />
    </g>
    <path d="M709 390 804 388 804 433 710 432Z" fill="url(#dots)" stroke="#1010b8" strokeWidth="2.600" />
    <path d="M755.500 258 756.500 500 760.500 1011M90 396 1617 380" stroke="#000" strokeDasharray="4 4" fill="none" />
    <path d="M1240 350V367L1244 363.500 1247 369.500 1249.500 368.300 1246.500 362.500H1251Z" fill="#000" stroke="#fff" strokeWidth="0.400" />
  </Scene>
);

/* ---------- tray ---------- */

const Tray = styled.aside`
  display: flex;
  flex-direction: column;
  flex: none;
  width: 303px;
  padding-left: 5px;
  border-left: 1px solid #fff;
`;
const TrayTitle = styled.header`
  display: flex;
  align-items: center;
  gap: 7px;
  height: 26px;
  flex: none;
  padding: 0 4px 2px;
  background: linear-gradient(#bccbda, #d6e3f1);
  font-size: 15px;
  line-height: 24px;
  h2 { flex: 1; margin: 0; font: inherit; }
`;
const TitleButton = styled.button<{ $close?: boolean }>`
  display: grid;
  place-items: center;
  width: 12px;
  height: 12px;
  padding: 0;
  border: 0;
  background: ${(p) => (p.$close ? "#c75050" : "none")};
  svg { display: block; }
`;
const TrayMain = styled.div`
  display: flex;
  flex: 1;
  min-height: 0;
`;
const Panels = styled.div`
  display: flex;
  flex-direction: column;
  flex: 1;
  min-width: 0;
  font-size: 12px;
  line-height: 18px;
`;
const ScrollBar = styled.div`
  display: grid;
  grid-template-rows: 24px 745fr 21px 59fr 24px;
  width: 21px;
  padding: 0 1px;
  border-left: 1px solid #fafafa;
`;
const ScrollButton = styled.button<{ $row: number }>`
  display: grid;
  place-items: center;
  grid-row: ${(p) => p.$row};
  padding: 0;
  border: 0;
  background: none;
`;
const ScrollThumb = styled.span`
  grid-row: 3;
  background: #cdcdcd;
`;
const DisplayPanel = styled.section`
  display: flex;
  flex-direction: column;
  gap: 6px;
  height: 94px;
  padding-left: 4px;
  line-height: 16px;
`;
const Checks = styled.div<{ $indent?: number; $gap: number }>`
  display: flex;
  flex-direction: column;
  gap: ${(p) => p.$gap}px;
  padding-left: ${(p) => p.$indent ?? 0}px;
`;
const CheckLabel = styled.label`
  display: flex;
  align-items: center;
  gap: 6px;
  height: 16px;
  color: #a0a0a0;
  text-shadow: 1px 1px #fff;
`;
const tick = (color: string) =>
  css`
    &:checked::after {
      content: "";
      width: 5px;
      height: 9px;
      margin-bottom: 3px;
      border: solid ${color};
      border-width: 0 2px 2px 0;
      transform: rotate(42deg);
    }
  `;
const SunkenCheck = styled.input`
  appearance: none;
  display: grid;
  place-items: center;
  width: 15px;
  height: 15px;
  border: solid;
  border-width: 2px 1px 1px 2px;
  border-color: #8a8a8a #fff #fff #8a8a8a;
  ${tick("#9b9b9b")}
`;
const FlatCheck = styled.input`
  && { margin: 0 auto; }
  appearance: none;
  display: grid;
  place-items: center;
  width: 15px;
  height: 15px;
  border: 1px solid #333;
  background: #fff;
  ${tick("#222")}
`;
const PanelHeader = styled.header`
  display: flex;
  align-items: center;
  gap: 8px;
  flex: none;
  height: 23px;
  padding: 0 3px 0 10px;
  border: 1px solid #a9a9a9;
  background: linear-gradient(#ededed, #b4b4b4);
  h3 { flex: 1; margin: 0; padding-bottom: 2px; font-size: 16px; font-weight: 400; line-height: 18px; }
`;
const PanelArrow = styled.span`
  border: solid transparent;
  border-width: 9px 5px 0;
  border-top-color: #000;
`;
const PanelClose = styled.button`
  display: grid;
  place-items: center;
  width: 17px;
  height: 17px;
  padding: 0;
  border: 1px solid #999;
  background: #e4e4e4;
  outline: 1px solid #f4f4f4;
`;
const Cross = ({ color = "#111", size = 7 }: { color?: string; size?: number }) => (
  <svg width={size} height={size} viewBox="0 0 7 7" aria-hidden="true">
    <path d="M0.500 0.500 6.500 6.500M6.500 0.500 0.500 6.500" stroke={color} strokeWidth="1.800" />
  </svg>
);
const Header = ({ title }: { title: string }) => (
  <PanelHeader>
    <PanelArrow />
    <h3>{title}</h3>
    <PanelClose type="button" aria-label={`${title} 닫기`}>
      <Cross />
    </PanelClose>
  </PanelHeader>
);
const SoftenPanel = styled.section`
  display: flex;
  flex-direction: column;
  flex: none;
  height: 149px;
  padding: 9px 9px 0 10px;
`;
const Muted = styled.span<{ $value?: boolean }>`
  color: #a0a0a0;
  text-shadow: 1px 1px #fff;
  ${(p) =>
    p.$value &&
    css`
      display: flex;
      gap: 7px;
      margin: 8px 0 13px;
      padding-left: 124px;
      b { font: 12px/18px "DejaVu Sans", sans-serif; }
    `}
`;
const AngleRange = styled.input`
  appearance: none;
  display: block;
  width: 237px;
  height: 18px;
  margin-left: 6px;
  background: linear-gradient(#8c8c8c, #8c8c8c) 0 7px / 100% 2px no-repeat, linear-gradient(#fff, #fff) 0 9px / 100% 1px no-repeat;
  &::-webkit-slider-thumb {
    appearance: none;
    width: 9px;
    height: 18px;
    background: linear-gradient(90deg, #d4d4d4 1px, #fafafa 1px 7px, #777 7px);
    clip-path: polygon(0 0, 100% 0, 100% 75%, 50% 100%, 0 75%);
  }
`;
const Ticks = styled.div`
  display: flex;
  justify-content: space-between;
  width: 230px;
  height: 3px;
  margin: 1px 0 9px 10px;
  border: solid #000;
  border-width: 0 1px;
`;
const PanelTools = styled.div`
  display: flex;
  align-items: center;
  gap: 9px;
  flex: none;
  height: 32px;
  padding: 0 5px 0 7px;
`;
const RightTools = styled.div`
  display: flex;
  align-items: center;
  gap: 12px;
  margin-left: auto;
`;
const MiniButton = styled.button`
  display: flex;
  align-items: center;
  padding: 0;
  border: 0;
  background: none;
  svg { display: block; }
`;
const LayerBox = styled.div`
  flex: none;
  height: 220px;
  background: #fff;
`;
const LayerTable = styled.table`
  width: 100%;
  border-collapse: separate;
  border-spacing: 0;
  table-layout: fixed;
  th {
    height: 20px;
    padding: 0 6px;
    border: solid;
    border-width: 1px 2px 2px 1px;
    border-color: #fff #777 #666 #fff;
    background: #f0f0f0;
    font-weight: 400;
    line-height: 17px;
    text-align: left;
  }
  td { height: 26px; padding: 0; text-align: center; }
`;
const LayerName = styled.label`
  display: flex;
  align-items: center;
  gap: 5px;
  padding-left: 6px;
  font: 12px/18px "Noto Sans", sans-serif;
`;
const LayerRadio = styled.input`
  appearance: none;
  width: 14px;
  height: 14px;
  border: 1px solid #333;
  border-radius: 50%;
  background: radial-gradient(#000 0 4px, #fff 5px);
`;
const Swatch = styled.button`
  display: block;
  width: 20px;
  height: 20px;
  && { margin: 0 auto; }
  padding: 0;
  border: 1px solid #e07070;
  background: #ff5555;
`;
const Splitter = styled.div`
  flex: none;
  height: 6px;
  margin: 2px 0 1px;
  border: 1px solid #b4b4b4;
`;
const SceneList = styled.div`
  flex: 1;
  border-top: 1px solid #999;
  background: #fff;
`;

const PlusMinus = ({ plus }: { plus?: boolean }) => (
  <svg width="18" height="18" viewBox="0 0 18 18" aria-hidden="true">
    <circle cx="9" cy="9" r="8" fill={plus ? "#fff" : "none"} stroke={plus ? "#000" : "#8a8a8a"} strokeWidth="1.400" />
    <path d={plus ? "M4 9H14M9 4V14" : "M4.500 9H13.500"} stroke={plus ? "#000" : "#8a8a8a"} strokeWidth={plus ? 2.4 : 1.6} />
  </svg>
);
const Details = () => (
  <svg width="16" height="18" viewBox="0 0 16 18" aria-hidden="true">
    <path d="M6 0 16 9 6 18Z" fill="#000" />
    <path d="M1 3H8V15H1Z" fill="#fff" stroke="#333" />
    <path d="M1 3H8V7H1Z" fill="#3e86d0" />
    <path d="M2.500 9.500H7M2.500 12H7" stroke="#888" />
  </svg>
);

/* ---------- status bar ---------- */

const StatusBar = styled.footer`
  display: flex;
  align-items: center;
  flex: none;
  height: 25px;
  padding: 4px 5px 0 7px;
  font-size: 17px;
  line-height: 21px;
`;
const StatusIcons = styled.div`
  display: flex;
  gap: 18px;
  margin-right: 13px;
`;
const Rule = styled.span`
  width: 1px;
  height: 15px;
  margin-right: 11px;
  background: #888;
`;
const Message = styled.span`
  flex: 1;
  white-space: nowrap;
`;
const Measure = styled.label`
  display: flex;
  align-items: center;
  gap: 11px;
  font-size: 16px;
`;
const MeasureInput = styled.input`
  width: 250px;
  height: 21px;
  border: 1px solid #aab3c4;
  border-bottom: 0;
  background: #f0f0f0;
`;

const menus = ["파일(F)", "편집(E)", "보기(V)", "카메라(C)", "그리기(R)", "도구(T)", "창(W)", "도움말(H)"];

export default function App() {
  return (
    <Screen>
      <GlobalStyle />
      <AppWindow>
        <MenuBar>
          {menus.map((m) => (
            <MenuItem key={m} type="button">{m}</MenuItem>
          ))}
        </MenuBar>

        <ToolBar>
          <ToolGroup><Grip /><Tools items={mainTools} /></ToolGroup>
          <ToolGroup><Grip /><Tools items={viewTools} /></ToolGroup>
          <ToolGroup><Grip /><Tools items={solidTools} /></ToolGroup>
          <ToolGroup>
            <Grip />
            <Tools items={[["shadow", "그림자"]]} />
            <ShadowSliders>
              <ShadowField>
                <ColorRange type="range" aria-label="날짜" min={0} max={100} defaultValue={86} $ramp="#fffff0, #f2c84a 25%, #f08a1c 45%, #fb1005 68%, #f88 86%, #fff" />
                <Marks>
                  {"JFMAMJJASOND".split("").map((m, i) => (
                    <span key={i}>{m}</span>
                  ))}
                </Marks>
              </ShadowField>
              <ShadowField>
                <ColorRange type="range" aria-label="시간" min={0} max={100} defaultValue={63} $ramp="#fff, #8db6da 35%, #6f8cf4 60%, #4a58c8 78%, #223" />
                <TimeMarks>
                  <span>07:08</span>
                  <span>정오</span>
                </TimeMarks>
              </ShadowField>
            </ShadowSliders>
          </ToolGroup>
          <ToolGroup $grow><Grip /><Tools items={[["grab", "상호 작용"]]} /></ToolGroup>
        </ToolBar>

        <Body>
          <Side>
            <Palette>
              <PaletteGrip />
              {paletteGroups.map((g, i) => (
                <PaletteGroup key={i}><Tools items={g} /></PaletteGroup>
              ))}
            </Palette>
          </Side>

          <Viewport>
            <Model />
            <KeyOverlay>
              <KeyBadge>&lt;LButtonDown&gt;</KeyBadge>
              <KeyBadge>&lt;LButtonUp&gt;</KeyBadge>
              <KeyBadge>&lt;Space&gt;</KeyBadge>
            </KeyOverlay>
          </Viewport>

          <Tray>
            <TrayTitle>
              <h2>기본 트레이</h2>
              <TitleButton type="button" aria-label="고정">
                <svg width="8" height="10" viewBox="0 0 8 10"><path d="M2 0.500H6V6H2ZM0 6H8M4 6V10M5.500 0V6" fill="none" stroke="#000" strokeWidth="1.200" /></svg>
              </TitleButton>
              <TitleButton type="button" aria-label="닫기" $close><Cross color="#fff" size={6} /></TitleButton>
            </TrayTitle>
            <TrayMain>
              <Panels>
                <DisplayPanel>
                  <span>표시:</span>
                  <Checks $indent={70} $gap={6}>
                    <CheckLabel><SunkenCheck type="checkbox" defaultChecked disabled />면에</CheckLabel>
                    <CheckLabel><SunkenCheck type="checkbox" defaultChecked disabled />바닥에</CheckLabel>
                    <CheckLabel><SunkenCheck type="checkbox" disabled />가장자리에</CheckLabel>
                  </Checks>
                </DisplayPanel>

                <Header title="가장자리 부드럽게" />
                <SoftenPanel>
                  <Muted>법선 간 각도:</Muted>
                  <Muted $value><b>17.3</b>도</Muted>
                  <AngleRange type="range" aria-label="법선 간 각도" min={0} max={180} defaultValue={18} disabled />
                  <Ticks />
                  <Checks $gap={4}>
                    <CheckLabel><SunkenCheck type="checkbox" defaultChecked disabled />법선 부드럽게</CheckLabel>
                    <CheckLabel><SunkenCheck type="checkbox" disabled />동일 평면 부드럽게</CheckLabel>
                  </Checks>
                </SoftenPanel>

                <Header title="레이어" />
                <PanelTools>
                  <MiniButton type="button" aria-label="레이어 추가"><PlusMinus plus /></MiniButton>
                  <MiniButton type="button" aria-label="레이어 삭제"><PlusMinus /></MiniButton>
                  <RightTools>
                    <MiniButton type="button" aria-label="세부 정보"><Details /></MiniButton>
                  </RightTools>
                </PanelTools>
                <LayerBox>
                  <LayerTable>
                    <colgroup><col /><col width="50" /><col width="40" /></colgroup>
                    <thead>
                      <tr><th>이름</th><th>보기</th><th>색상</th></tr>
                    </thead>
                    <tbody>
                      <tr>
                        <td><LayerName><LayerRadio type="radio" name="layer" defaultChecked />Layer0</LayerName></td>
                        <td><FlatCheck type="checkbox" aria-label="Layer0 보기" defaultChecked /></td>
                        <td><Swatch type="button" aria-label="Layer0 색상" /></td>
                      </tr>
                    </tbody>
                  </LayerTable>
                </LayerBox>
                <Splitter />

                <Header title="장면" />
                <PanelTools>
                  <MiniButton type="button" aria-label="장면 업데이트">
                    <svg width="18" height="18" viewBox="0 0 18 18" fill="none" stroke="#8a8a8a" strokeWidth="1.800"><path d="M2 7Q4 2 9 2 13 2 15 6M16 11Q14 16 9 16 5 16 3 12" /><path d="M16 1V7H10ZM2 17V11H8Z" fill="#8a8a8a" stroke="none" /></svg>
                  </MiniButton>
                  <MiniButton type="button" aria-label="장면 추가"><PlusMinus plus /></MiniButton>
                  <MiniButton type="button" aria-label="장면 제거"><PlusMinus /></MiniButton>
                  <RightTools>
                    <MiniButton type="button" aria-label="장면 아래로">
                      <svg width="12" height="14" viewBox="0 0 12 14"><path d="M10 1.500Q6 1.500 6 5V10" fill="none" stroke="#777" strokeWidth="2.200" /><path d="M2.500 9H9L6 13Z" fill="#777" /></svg>
                    </MiniButton>
                    <MiniButton type="button" aria-label="장면 위로">
                      <svg width="12" height="14" viewBox="0 0 12 14"><path d="M3 12.500Q7 12.500 7 9V4" fill="none" stroke="#777" strokeWidth="2.200" /><path d="M3.500 5H10.500L7 1Z" fill="#777" /></svg>
                    </MiniButton>
                    <MiniButton type="button" aria-label="보기 옵션">
                      <svg width="19" height="18" viewBox="0 0 19 18"><path d="M1 1H6V6H1ZM1 12H6V17H1Z" fill="none" stroke="#222" strokeWidth="1.600" /><path d="M9 1.500H17M9 5.500H14M9 12.500H17M9 16.500H14" stroke="#222" strokeWidth="1.600" /></svg>
                      <Triangle $small />
                    </MiniButton>
                    <MiniButton type="button" aria-label="세부 정보 표시">
                      <svg width="12" height="18" viewBox="0 0 12 18"><path d="M0.500 0.500H11.500V8H0.500Z" fill="#fff" stroke="#777" /><path d="M2 2H10L6 7ZM0 8H12V18H0Z" fill="#000" /><path d="M3 13H9M6 10V16" stroke="#fff" strokeWidth="2" /></svg>
                    </MiniButton>
                    <MiniButton type="button" aria-label="메뉴"><Details /></MiniButton>
                  </RightTools>
                </PanelTools>
                <SceneList />
              </Panels>
              <ScrollBar>
                <ScrollButton type="button" aria-label="위로 스크롤" $row={1}>
                  <svg width="10" height="7" viewBox="0 0 10 7"><path d="M1 6 5 1.500 9 6" fill="none" stroke="#505050" strokeWidth="2" /></svg>
                </ScrollButton>
                <ScrollThumb />
                <ScrollButton type="button" aria-label="아래로 스크롤" $row={5}>
                  <svg width="10" height="7" viewBox="0 0 10 7"><path d="M1 1 5 5.500 9 1" fill="none" stroke="#505050" strokeWidth="2" /></svg>
                </ScrollButton>
              </ScrollBar>
            </TrayMain>
          </Tray>
        </Body>

        <StatusBar>
          <StatusIcons>
            <svg width="17" height="18" viewBox="0 0 17 18"><circle cx="8.500" cy="9" r="7.500" fill="none" stroke="#a0a0a0" strokeWidth="1.300" /><path d="M8.500 15 5.500 7Q6 3.500 8.500 3.500T11.500 7Z" fill="#a0a0a0" /></svg>
            <svg width="17" height="18" viewBox="0 0 17 18"><circle cx="8.500" cy="9" r="7.500" fill="none" stroke="#000" strokeWidth="1.600" /><circle cx="8.500" cy="4.800" r="1.600" /><path d="M6.500 7.500H10.500V10.500H9.800V14.500H7.200V10.500H6.500Z" /></svg>
            <svg width="17" height="18" viewBox="0 0 17 18"><circle cx="8.500" cy="9" r="7.500" fill="none" stroke="#a0a0a0" strokeWidth="1.300" /><circle cx="8.500" cy="6.800" r="3.200" fill="#a0a0a0" /><path d="M3 13Q8.500 8.500 14 13 8.500 18 3 13Z" fill="#a0a0a0" /></svg>
          </StatusIcons>
          <Rule />
          <Message>개체를 선택하십시오. 선택을 확대하려면 Shift를 누르십시오. 여러 항목을 선택하려면 마우스를 끄십시오.</Message>
          <Rule />
          <Measure>단위<MeasureInput type="text" /></Measure>
        </StatusBar>
      </AppWindow>
    </Screen>
  );
}
